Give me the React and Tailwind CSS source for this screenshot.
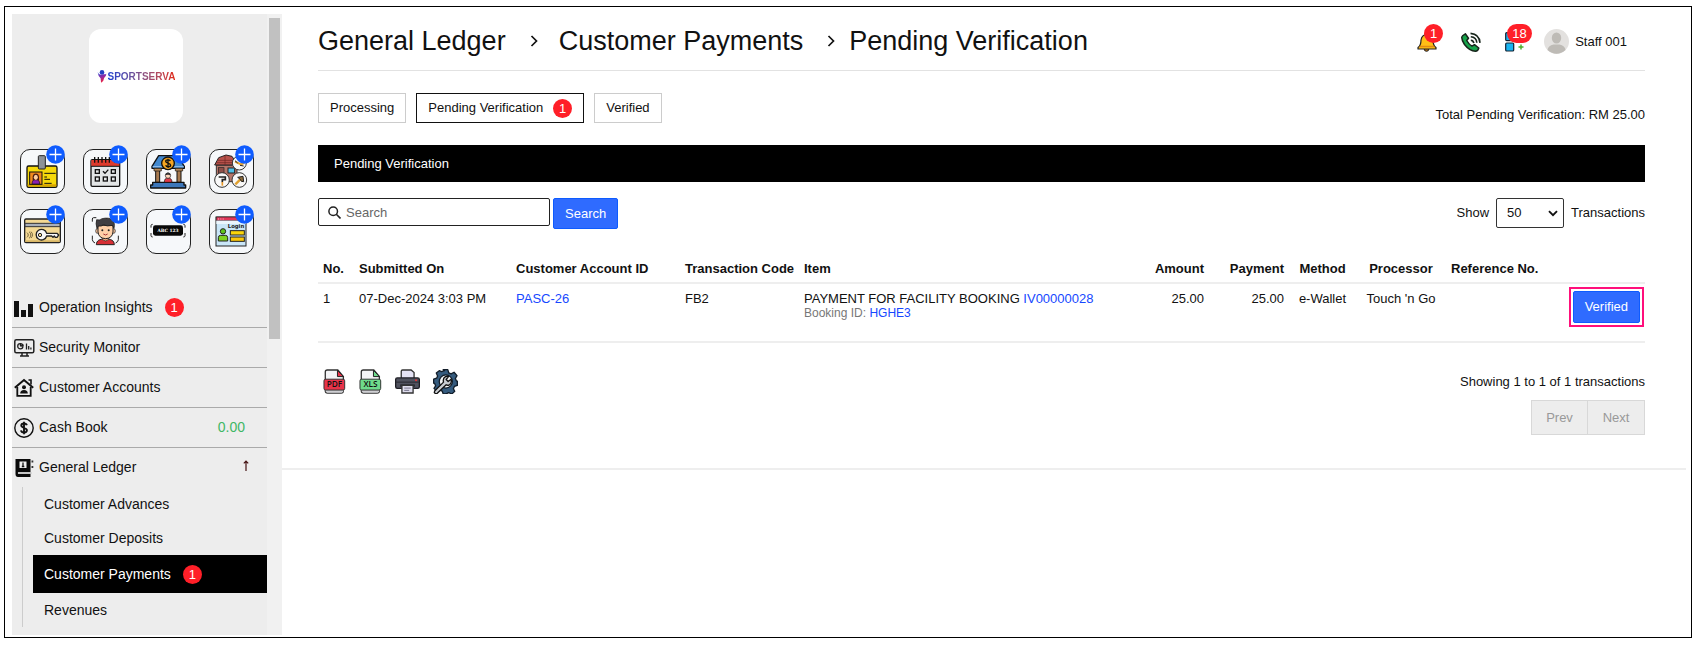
import React from "react";

const tiles = [
  {
    label: "Add ID card",
    art: (
      <>
        <rect x="21" y="51" width="90" height="64" rx="5" fill="#f6d90b" stroke="#111" strokeWidth="4" />
        <path d="M23 106h86v6H23z" fill="#d9a400" />
        <rect x="55" y="20" width="21" height="40" rx="3" fill="#8d9297" stroke="#222" strokeWidth="3" />
        <rect x="29" y="69" width="37" height="37" fill="#f08a1d" stroke="#111" strokeWidth="3" />
        <path d="M36 105c0-10 4-14 11-14s12 4 12 14z" fill="#8a1fb0" stroke="#111" strokeWidth="2" />
        <path d="M38 94V84c0-14 19-14 19 0v10z" fill="#4a1c12" />
        <ellipse cx="47.500" cy="85" rx="6" ry="8" fill="#ffd0a0" />
        <path d="M73 73h34M73 84h8M73 91h17M73 103h22" stroke="#111" strokeWidth="3" />
      </>
    ),
  },
  {
    label: "Add calendar event",
    art: (
      <>
        <rect x="24" y="32" width="86" height="80" rx="4" fill="#e2e5e6" stroke="#111" strokeWidth="4" />
        <path d="M25 33h84v18H25z" fill="#dd3a2c" />
        <path d="M24 52h86" stroke="#111" strokeWidth="3" />
        <path d="M35 24v17M46 24v17M57 24v17M68 24v17M79 24v17M96 24v17" stroke="#111" strokeWidth="4" />
        <g fill="#e2e5e6" stroke="#111" strokeWidth="4">
          <rect x="37" y="62" width="12" height="11" />
          <rect x="85" y="62" width="12" height="11" />
          <rect x="37" y="84" width="12" height="12" />
          <rect x="61" y="84" width="12" height="12" />
          <rect x="85" y="84" width="12" height="12" />
        </g>
        <path d="M60 67l6 6 10-11" fill="none" stroke="#111" strokeWidth="4" />
      </>
    ),
  },
  {
    label: "Add bank account",
    art: (
      <>
        <path d="M38 20h56l21 32v6H18v-6z" fill="#4289cf" stroke="#111" strokeWidth="4" strokeLinejoin="round" />
        <path d="M20 53h93" stroke="#8ab9ea" strokeWidth="4" />
        <rect x="29" y="60" width="12" height="40" fill="#a87a4f" stroke="#111" strokeWidth="3" />
        <rect x="93" y="60" width="12" height="40" fill="#a87a4f" stroke="#111" strokeWidth="3" />
        <path d="M24 58h22v8H24zM88 58h22v8H88z" fill="#b88a58" stroke="#111" strokeWidth="2" />
        <path d="M20 100h94v8h5v9H14v-9h6z" fill="#3d77ba" stroke="#111" strokeWidth="4" strokeLinejoin="round" />
        <path d="M55 100c0-10 4-13 11-13s12 3 12 13z" fill="#e23a48" stroke="#111" strokeWidth="2" />
        <circle cx="66" cy="80" r="8" fill="#ffd8bd" stroke="#222" strokeWidth="2" />
        <path d="M58 79c0-11 16-11 16 0-5 0-8-4-16 0" fill="#333" />
        <circle cx="66" cy="43" r="19" fill="#f5a623" stroke="#111" strokeWidth="4" />
        <path d="M73 36c-2-4-14-5-14 1 0 7 15 4 15 12 0 6-13 6-15 0M66 29v28" fill="none" stroke="#111" strokeWidth="4" />
      </>
    ),
  },
  {
    label: "Add facility",
    art: (
      <>
        <path d="M22 48h62v50H22z" fill="#b5766a" stroke="#333" strokeWidth="3" />
        <path d="M17 48l12-22 22-8 18 4 17 26z" fill="#b8524c" stroke="#222" strokeWidth="3" strokeLinejoin="round" />
        <path d="M27 34h48M22 41h58M48 18v30" stroke="#6b2522" strokeWidth="2" />
        <rect x="28" y="56" width="17" height="20" fill="#8d4f48" stroke="#222" strokeWidth="2" />
        <rect x="57" y="57" width="20" height="15" fill="#4fc0e8" stroke="#222" strokeWidth="3" />
        <g fill="#f8f8f8" stroke="#333" strokeWidth="3">
          <circle cx="91" cy="42" r="21" />
          <circle cx="39" cy="93" r="22" />
          <circle cx="91" cy="93" r="22" />
        </g>
        <path d="M78 38l18 8 9-4" fill="none" stroke="#e0a030" strokeWidth="6" />
        <path d="M78 35l8 7M93 49l11 2" stroke="#222" strokeWidth="3" />
        <path d="M29 84h20v8h-9v8" fill="none" stroke="#222" strokeWidth="5" />
        <path d="M40 99v11" stroke="#e89a2c" strokeWidth="5" />
        <path d="M79 106l18-18" stroke="#e0a030" strokeWidth="7" />
        <path d="M86 85l16-3 2 16-7-1-3-6z" fill="#8b6a3c" stroke="#222" strokeWidth="3" />
      </>
    ),
  },
  {
    label: "Add key card",
    art: (
      <>
        <rect x="14" y="30" width="107" height="71" rx="4" fill="#f4d993" stroke="#222" strokeWidth="4" />
        <path d="M16 94h103v5H16z" fill="#d8b768" />
        <path d="M15 43h105v10H15z" fill="#a9afb9" stroke="#333" strokeWidth="3" />
        <path d="M21 71c5 4 5 10 0 14M27 68c7 5 7 15 0 20M33 68c6 6 6 13 0 19" fill="none" stroke="#75653f" strokeWidth="3" />
        <path d="M80 73h31l5 5-5 7h-5l-3-4-4 4-4-4H80a16 16 0 1 1 0-8z" fill="#f8f8f8" stroke="#222" strokeWidth="4" strokeLinejoin="round" />
        <circle cx="60" cy="78" r="5" fill="#f4d993" stroke="#222" strokeWidth="3" />
      </>
    ),
  },
  {
    label: "Add face recognition",
    art: (
      <>
        <path d="M28 38V30q0-4 4-4h8M28 80v12q0 6 8 10M106 80v12q0 6-8 10" fill="none" stroke="#222" strokeWidth="3" />
        <path d="M40 107c1-13 9-17 27-17s26 4 27 17z" fill="#d62f35" stroke="#222" strokeWidth="3" />
        <path d="M58 84h19v8q-9 8-19 0z" fill="#eba983" stroke="#222" strokeWidth="2" />
        <ellipse cx="43" cy="66" rx="5" ry="7" fill="#f5c29c" stroke="#222" strokeWidth="2" />
        <ellipse cx="92" cy="66" rx="5" ry="7" fill="#f5c29c" stroke="#222" strokeWidth="2" />
        <path d="M45 49h45v20q-2 19-22 20-21-1-23-20z" fill="#ffd0a8" stroke="#222" strokeWidth="3" />
        <path d="M42 59q-5-16-1-27 9 3 16-3 21-5 31 4 9 7 5 25l-5-9q-16 5-27-2-5 6-15 4z" fill="#403f43" stroke="#111" strokeWidth="2" />
        <circle cx="58" cy="64" r="3" fill="#222" />
        <circle cx="77" cy="64" r="3" fill="#222" />
        <path d="M61 75q7 6 13 0" fill="none" stroke="#a33" strokeWidth="3" />
      </>
    ),
  },
  {
    label: "Add licence plate",
    art: (
      <>
        <path d="M15 56v-6q0-4 5-4M15 72v8q0 4 5 4M117 56v-6q0-4-5-4M117 72v8q0 4-5 4" fill="none" stroke="#222" strokeWidth="3" />
        <rect x="21" y="49" width="90" height="31" rx="7" fill="#080808" />
        <text x="66" y="69" textAnchor="middle" fontFamily="DejaVu Serif, serif" fontWeight="700" fontSize="13" fill="#fff">ABC 123</text>
      </>
    ),
  },
  {
    label: "Add login",
    art: (
      <>
        <rect x="21" y="24" width="90" height="87" fill="#c9e6f8" stroke="#222" strokeWidth="3" />
        <path d="M22 24h88v11H22z" fill="#e2365a" stroke="#222" strokeWidth="2" />
        <path d="M22 35h88v10H22z" fill="#ebf6fd" />
        <path d="M27 30h3M34 30h3M41 30h3" stroke="#fff" strokeWidth="2" />
        <text x="81" y="56" textAnchor="middle" fontFamily="DejaVu Sans, sans-serif" fontWeight="700" fontSize="16" fill="#222">Login</text>
        <path d="M28 96V86q0-7 7-7h14q7 0 7 7v10z" fill="#7fd321" stroke="#222" strokeWidth="3" />
        <circle cx="42" cy="67" r="8" fill="#5fc41e" stroke="#222" strokeWidth="3" />
        <rect x="64" y="65" width="42" height="13" fill="#fbd50b" stroke="#222" strokeWidth="3" />
        <rect x="64" y="84" width="42" height="13" fill="#fbc70b" stroke="#222" strokeWidth="3" />
      </>
    ),
  },
];

function Tile({ label, art }) {
  return (
    <button type="button" aria-label={label} className="relative h-[45px] rounded-[10px] border border-[#222] bg-[#f6f8fa]">
      <svg viewBox="0 0 135 135" className="absolute -inset-px size-[45px]" aria-hidden="true">{art}</svg>
      <svg viewBox="0 0 19 19" className="absolute -top-[5px] -right-px size-[19px]" aria-hidden="true">
        <circle cx="9.500" cy="9.500" r="9.300" fill="#0f5cff" />
        <path d="M9.500 3.500v12M3.500 9.500h12" stroke="#fff" strokeWidth="1.300" />
      </svg>
    </button>
  );
}

function Count({ children }) {
  return (
    <span className="inline-flex h-[19px] min-w-[19px] items-center justify-center rounded-full bg-[#ff1f28] px-[5px] text-[13px] leading-[19px] text-white">
      {children}
    </span>
  );
}

const navIcons = {
  insights: (
    <svg viewBox="0 0 20 20" className="size-5" aria-hidden="true">
      <path d="M0 3h5v16H0zM7 12h5v7H7zM14 6h5v13h-5z" fill="#111" />
    </svg>
  ),
  monitor: (
    <svg viewBox="0 0 21 20" className="h-5 w-[21px]" fill="none" stroke="#222" aria-hidden="true">
      <rect x=".8" y="1.800" width="19" height="13" rx="1.500" strokeWidth="1.500" />
      <path d="M8 15v2.500M13 15v2.500M6 18h9" strokeWidth="1.500" />
      <circle cx="6.300" cy="8.300" r="2.600" strokeWidth="1.300" />
      <path d="M6.500 8.300V5M6.500 8.300l3-1.500M12.500 5.500v6M14.700 8v3.500M16.900 9.500v2" strokeWidth="1.300" />
    </svg>
  ),
  home: (
    <svg viewBox="0 0 20 20" className="size-5" fill="none" stroke="#111" aria-hidden="true">
      <path d="M.8 9.800L10 2l9.200 7.800" strokeWidth="2" />
      <path d="M14.500 2h2.500v4.500" strokeWidth="1.600" />
      <path d="M3.300 9v8.900h13.400V9" strokeWidth="1.800" />
      <circle cx="10" cy="9.200" r="2" fill="#111" stroke="none" />
      <path d="M6.200 15.500q0-3.500 3.800-3.500t3.800 3.500z" fill="#111" stroke="none" />
    </svg>
  ),
  cash: (
    <svg viewBox="0 0 20 20" className="size-5" fill="none" stroke="#111" aria-hidden="true">
      <circle cx="10" cy="10" r="9.200" strokeWidth="1.400" />
      <path d="M12.800 7.300C12.300 4.800 7.300 4.900 7.300 7.500c0 2.900 5.600 1.800 5.600 4.800 0 2.900-5.400 2.900-5.900.1M10 3.800v12.400" strokeWidth="1.900" />
    </svg>
  ),
  ledger: (
    <svg viewBox="0 0 20 20" className="size-5" aria-hidden="true">
      <path d="M2 1h14.500v13H5q-1.200 0-1.200 1T5 16h11.500v3H4q-2.500 0-2.500-3V1z" fill="#0a0a0a" />
      <path d="M4.500 15h13" stroke="#888" strokeWidth=".8" />
      <path d="M5.500 3.500h7v6.500h-7z" fill="#eee" />
      <path d="M9 4.500v4M7.800 8.500h2.500" stroke="#111" strokeWidth="1.300" />
      <path d="M17.500 2.500h1.800v2h-1.800zM17.500 8h1.800v2h-1.800z" fill="#333" />
    </svg>
  ),
};

function NavRow({ icon, label, divider = true, children }) {
  return (
    <li className={divider ? "border-b border-[#aaa]" : ""}>
      <a href="#" className="flex h-[39px] items-center text-[14px]">
        <span className="ml-0.5 flex w-[25px]">{navIcons[icon]}</span>
        <span>{label}</span>
        {children}
      </a>
    </li>
  );
}

function Sidebar() {
  return (
    <aside className="flex w-[270px] shrink-0 bg-[#f1f1f1]">
      <div className="flex-1 bg-[#ededed]">
        <div className="flex justify-center pt-[15px] pr-[7px]">
          <a href="#" className="flex size-[94px] items-center justify-center rounded-xl bg-white">
            <svg viewBox="0 0 10 14" className="h-[13px] w-[10px]" aria-hidden="true">
              <defs>
                <linearGradient id="mark" x1="0" y1="0" x2="0.300" y2="1">
                  <stop offset="0" stopColor="#2448d6" />
                  <stop offset="0.500" stopColor="#8a2aa8" />
                  <stop offset="1" stopColor="#ee2440" />
                </linearGradient>
              </defs>
              <circle cx="5" cy="2.600" r="2.500" fill="#2342c4" />
              <path d="M.3 2.500Q1.500 5 3.500 5.200L7 4.500Q8.500 4.800 9.700 4 9.300 7.500 7.300 8.500 7 12 4 13.800L3.500 9Q1 7 .3 2.500z" fill="url(#mark)" />
            </svg>
            <span className="ml-px bg-linear-to-r from-[#163bd0] to-[#e0260a] bg-clip-text text-[10px] font-bold text-transparent">SPORTSERVA</span>
          </a>
        </div>
        <div className="mt-[26px] grid grid-cols-[repeat(4,45px)] gap-x-[18px] gap-y-[15px] pl-2">
          {tiles.map((t) => <Tile key={t.label} {...t} />)}
        </div>
        <nav className="mt-[34px]">
          <ul>
            <NavRow icon="insights" label="Operation Insights">
              <span className="ml-3 flex"><Count>1</Count></span>
            </NavRow>
            <NavRow icon="monitor" label="Security Monitor" />
            <NavRow icon="home" label="Customer Accounts" />
            <NavRow icon="cash" label="Cash Book">
              <span className="mr-[22px] ml-auto text-[#3fb765]">0.00</span>
            </NavRow>
            <NavRow icon="ledger" label="General Ledger" divider={false}>
              <svg viewBox="0 0 6 11" className="mr-[18px] mb-1 ml-auto h-[11px] w-[6px]" fill="none" stroke="#411" aria-hidden="true">
                <path d="M3 11V1M.8 3.300L3 1l2.200 2.300" strokeWidth="1.200" />
              </svg>
            </NavRow>
          </ul>
          <ul className="ml-[10px] border-l border-[#ccc] text-[14px]">
            <li><a href="#" className="ml-[10px] flex h-[34px] items-center pl-[11px]">Customer Advances</a></li>
            <li><a href="#" className="ml-[10px] flex h-[34px] items-center pl-[11px]">Customer Deposits</a></li>
            <li>
              <a href="#" aria-current="page" className="ml-[10px] flex h-[38px] items-center gap-3 bg-black pl-[11px] text-white">
                Customer Payments <Count>1</Count>
              </a>
            </li>
            <li><a href="#" className="ml-[10px] flex h-[34px] items-center pl-[11px]">Revenues</a></li>
          </ul>
        </nav>
      </div>
      <div className="w-[15px] px-0.5 pt-1">
        <div className="h-[52%] bg-[#c1c1c1]" />
      </div>
    </aside>
  );
}

function Chevron() {
  return (
    <svg viewBox="0 0 8 12" className="mb-0.5 h-3 w-2" fill="none" stroke="#111" aria-hidden="true">
      <path d="M1.500 1L6.500 6l-5 5" strokeWidth="1.700" />
    </svg>
  );
}

function TopIcons() {
  return (
    <div className="flex items-center text-[13px]">
      <button type="button" aria-label="Notifications" className="relative">
        <svg viewBox="0 0 20 20" className="size-5" aria-hidden="true">
          <circle cx="9.500" cy="17" r="2.300" fill="#b8741a" stroke="#222" />
          <path d="M4 8q1-5.500 6-5.500T16 8q0 5.500 3 7.500v1.500H1V15.500Q4 13.500 4 8z" fill="#ffbe16" stroke="#222" strokeWidth="1.200" strokeLinejoin="round" />
          <path d="M2.500 14.500h15" stroke="#e08c12" strokeWidth="1.500" />
        </svg>
        <span className="absolute -top-2 left-[7px] flex"><Count>1</Count></span>
      </button>
      <button type="button" aria-label="Calls" className="ml-6">
        <svg viewBox="0 0 20 20" className="size-5" fill="none" stroke="#16241a" aria-hidden="true">
          <path d="M.8 5Q1 3.500 4.300 1.800L7.500 6.200 5.700 8.500Q8 12.500 11 14.200L13.500 12.700 17.800 16Q17 19 14.500 19.200 8.500 19 3.500 12.500.5 8 .8 5z" fill="#16a34a" strokeWidth="1.500" strokeLinejoin="round" />
          <path d="M9.800 8.200q2.700.3 3 3M9.800 4.800q5.600.4 6 6M9.500 1.400q8.800.7 9.500 9.500" strokeWidth="1.600" />
        </svg>
      </button>
      <button type="button" aria-label="Tasks" className="relative ml-6">
        <svg viewBox="0 0 20 20" className="size-5" aria-hidden="true">
          <rect x=".7" y=".7" width="8" height="8" rx="1" fill="#19b5f2" stroke="#123" strokeWidth="1.200" />
          <rect x="11" y=".7" width="8" height="8" rx="1" fill="#19b5f2" stroke="#123" strokeWidth="1.200" />
          <rect x=".7" y="11" width="8" height="8" rx="1" fill="#19b5f2" stroke="#123" strokeWidth="1.200" />
          <path d="M16 12.500v5M13.500 15h5" stroke="#4caf2c" strokeWidth="1.500" />
        </svg>
        <span className="absolute -top-2 left-0.5 flex"><Count>18</Count></span>
      </button>
      <a href="#" className="ml-[19px] flex items-center gap-1.5">
        <svg viewBox="0 0 25 25" className="size-[25px]" aria-hidden="true">
          <circle cx="12.500" cy="12.500" r="12.500" fill="#e3e1df" />
          <ellipse cx="12.500" cy="9" rx="4.700" ry="5.500" fill="#bebbb6" />
          <path d="M3.500 21q.5-4.500 6-5.500h6q5.500 1 6 5.500-9 7.500-18 0z" fill="#bebbb6" />
        </svg>
        Staff 001
      </a>
    </div>
  );
}

function FileIcon({ label, color, fold }) {
  return (
    <svg viewBox="0 0 68 76" className="h-[25px] w-[23px]" aria-hidden="true">
      <path d="M6 9q0-6 6-6h32l17 20v43q0 7-7 7H13q-7 0-7-7z" fill="#f4f4f6" stroke="#333" strokeWidth="4" />
      <path d="M7 63h54v4q0 4-5 5H12q-5-1-5-5z" fill="#cfcfd3" />
      <path d="M43 4v19h18z" fill={fold} stroke="#222" strokeWidth="3" strokeLinejoin="round" />
      <rect x="2" y="31" width="63" height="33" rx="5" fill={color} stroke="#333" strokeWidth="3" />
      <text x="34" y="56" textAnchor="middle" fontFamily="Open Sans, sans-serif" fontWeight="600" fontSize="25" fill="#111">{label}</text>
    </svg>
  );
}

function ExportIcons() {
  return (
    <div className="flex items-start gap-[13px] pl-[5px]">
      <button type="button" aria-label="Export PDF"><FileIcon label="PDF" color="#e83349" fold="#e83349" /></button>
      <button type="button" aria-label="Export XLS"><FileIcon label="XLS" color="#6edb8b" fold="#6edb8b" /></button>
      <button type="button" aria-label="Print">
        <svg viewBox="0 0 76 76" className="size-[25px]" aria-hidden="true">
          <path d="M19 29V7q0-4 4-4h26l9 8v18z" fill="#e4e2f4" stroke="#333" strokeWidth="4" />
          <path d="M7 27h62q5 0 5 5v22q0 5-5 5H7q-5 0-5-5V32q0-5 5-5z" fill="#50525e" stroke="#1d1d24" strokeWidth="4" />
          <path d="M3 40h70" stroke="#30313a" strokeWidth="4" />
          <circle cx="64" cy="34" r="3" fill="#e33" />
          <path d="M16 47h44v7H16z" fill="#202028" />
          <path d="M21 50h34v23H21z" fill="#dedcec" stroke="#333" strokeWidth="4" />
          <path d="M28 58h20M28 65h15" stroke="#77758c" strokeWidth="3" />
        </svg>
      </button>
      <button type="button" aria-label="Table settings">
        <svg viewBox="0 0 76 76" className="size-[25px]" aria-hidden="true">
          <path d="M31 2h14l3 10 7 3 9-5 9 10-5 9 3 7 3 1v13l-9 3-3 7 4 8-9 8-9-4-7 3-2 1H31l-3-9-7-3-9 4-9-9 5-8-3-7-3-1V31l9-3 3-7-4-9 9-7 7 3 9-3z" fill="#355b7e" stroke="#111c28" strokeWidth="4" strokeLinejoin="round" />
          <circle cx="39" cy="38" r="20" fill="#f6f7f8" stroke="#111c28" strokeWidth="4" />
          <path d="M5 67L32 40q-3-12 6-17 5-2 9 0l-7 9 6 6 9-7q3 12-5 17-6 3-10 0L13 74q-6 2-9-2z" fill="#c9cdd2" stroke="#111" strokeWidth="4" strokeLinejoin="round" />
        </svg>
      </button>
    </div>
  );
}

function PaymentsTable() {
  return (
    <table className="mt-[23px] w-full table-fixed border-separate border-spacing-0 text-left leading-4 whitespace-nowrap">
      <colgroup>
        <col className="w-[36px]" />
        <col className="w-[157px]" />
        <col className="w-[169px]" />
        <col className="w-[119px]" />
        <col />
        <col className="w-[80px]" />
        <col className="w-[80px]" />
        <col className="w-[67px]" />
        <col className="w-[90px]" />
        <col className="w-[115px]" />
        <col className="w-[84px]" />
      </colgroup>
      <thead>
        <tr className="*:h-8 *:border-b-2 *:border-[#eee] *:px-[5px] *:pt-[3px] *:font-bold">
          <th>No.</th>
          <th>Submitted On</th>
          <th>Customer Account ID</th>
          <th>Transaction Code</th>
          <th>Item</th>
          <th className="text-right">Amount</th>
          <th className="text-right">Payment</th>
          <th className="text-center">Method</th>
          <th className="text-center">Processor</th>
          <th>Reference No.</th>
          <th aria-label="Action"></th>
        </tr>
      </thead>
      <tbody>
        <tr className="*:h-[59px] *:border-b-2 *:border-[#eee] *:px-[5px] *:pt-[7px] *:align-top">
          <td>1</td>
          <td>07-Dec-2024 3:03 PM</td>
          <td><a href="#" className="text-[#1648ff]">PASC-26</a></td>
          <td>FB2</td>
          <td>
            PAYMENT FOR FACILITY BOOKING <a href="#" className="text-[#1648ff]">IV00000028</a>
            <div className="text-[12px] leading-3 text-[#777]">Booking ID: <a href="#" className="text-[#1648ff]">HGHE3</a></div>
          </td>
          <td className="text-right">25.00</td>
          <td className="text-right">25.00</td>
          <td className="text-center">e-Wallet</td>
          <td className="text-center">Touch 'n Go</td>
          <td></td>
          <td className="pt-[3px]! pr-px! text-right">
            <span className="inline-flex border-2 border-[#ff0f7b] p-[2px]">
              <button type="button" className="h-8 rounded-xs border border-[#0d5bff] bg-[#2f6bff] px-[11px] text-white">Verified</button>
            </span>
          </td>
        </tr>
      </tbody>
    </table>
  );
}

export default function App() {
  return (
    <div className="flex min-h-screen flex-col bg-white px-1 pt-1.5 pb-2.5 font-['Liberation_Sans',Arial,sans-serif] text-[13px] text-[#111]">
      <div className="flex flex-1 border border-black pt-[7px] pr-[5px] pb-0.5 pl-[7px]">
        <Sidebar />
        <main className="min-w-0 flex-1">
          <div className="border-b-2 border-[#eee] pr-[41px] pb-[33px] pl-9">
            <header className="flex h-[57px] items-center justify-between border-b border-[#e2e2e2] pb-px">
              <div className="flex items-center text-[27px]">
                <a href="#">General Ledger</a>
                <span className="mr-[21px] ml-6"><Chevron /></span>
                <a href="#">Customer Payments</a>
                <span className="mr-[14px] ml-6"><Chevron /></span>
                <h1>Pending Verification</h1>
              </div>
              <div className="pr-[18px]"><TopIcons /></div>
            </header>
            <div className="mt-[22px] flex items-end justify-between">
              <div className="flex gap-[10px]">
                <button type="button" className="h-[30px] border border-[#ccc] px-[11px]">Processing</button>
                <button type="button" aria-pressed="true" className="flex h-[30px] items-center gap-[10px] border border-[#111] px-[11px]">
                  Pending Verification <Count>1</Count>
                </button>
                <button type="button" className="h-[30px] border border-[#ccc] px-[11px]">Verified</button>
              </div>
              <p className="leading-4">Total Pending Verification: RM 25.00</p>
            </div>
            <h2 className="mt-[22px] flex h-[37px] items-center bg-black px-4 text-white">Pending Verification</h2>
            <div className="mt-4 flex items-start justify-between">
              <form className="flex items-start gap-[3px]" onSubmit={(e) => e.preventDefault()}>
                <div className="relative">
                  <svg viewBox="0 0 13 13" className="absolute top-2 left-[10px] size-[13px]" fill="none" stroke="#222" aria-hidden="true">
                    <circle cx="5.200" cy="5.200" r="4.300" strokeWidth="1.500" />
                    <path d="M8.300 8.300l4.200 4.200" strokeWidth="1.600" />
                  </svg>
                  <input type="search" aria-label="Search" placeholder="Search" className="h-[28px] w-[232px] rounded-xs border border-[#222] pr-2 pl-[27px] placeholder:text-[#666]" />
                </div>
                <button type="submit" className="h-[31px] rounded-xs border border-[#0d5bff] bg-[#2f6bff] px-[11px] text-white">Search</button>
              </form>
              <div className="flex items-center gap-[7px]">
                <label htmlFor="page-size">Show</label>
                <div className="relative">
                  <select id="page-size" defaultValue="50" className="h-[30px] w-[68px] appearance-none rounded-xs border border-[#333] pl-2.5">
                    <option>25</option>
                    <option>50</option>
                    <option>100</option>
                  </select>
                  <svg viewBox="0 0 10 7" className="pointer-events-none absolute top-3 right-[6px] h-[7px] w-[10px]" fill="none" stroke="#111" aria-hidden="true">
                    <path d="M1 1.200l4 4 4-4" strokeWidth="1.900" />
                  </svg>
                </div>
                <span>Transactions</span>
              </div>
            </div>
            <PaymentsTable />
            <div className="mt-[26px] flex justify-between">
              <ExportIcons />
              <div className="flex flex-col items-end gap-[6px]">
                <p className="leading-[25px]">Showing 1 to 1 of 1 transactions</p>
                <div className="flex text-[#999]">
                  <button type="button" disabled className="h-[35px] w-[57px] border border-[#d8d8d8] bg-[#ededed]">Prev</button>
                  <button type="button" disabled className="h-[35px] w-[57px] border border-l-0 border-[#d8d8d8] bg-[#ededed]">Next</button>
                </div>
              </div>
            </div>
          </div>
        </main>
      </div>
    </div>
  );
}
